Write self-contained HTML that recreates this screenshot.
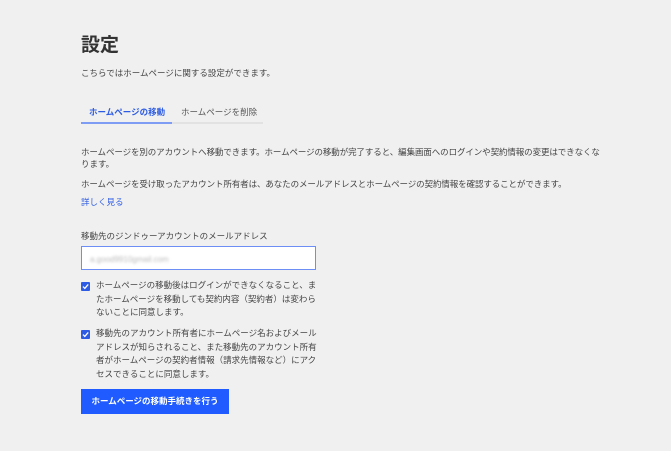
<!DOCTYPE html>
<html><head><meta charset="utf-8"><style>
*{margin:0;padding:0;box-sizing:border-box}
body{width:671px;height:451px;background:#f0f0f0;font-family:"Liberation Sans","Noto Sans CJK JP",sans-serif;color:#444;font-size:8.5px;position:relative;overflow:hidden}
.a{position:absolute;white-space:nowrap}
h1{position:absolute;left:81px;top:30px;font-size:19px;font-weight:bold;color:#333}
.tabline{position:absolute;left:81px;top:122px;width:182px;height:2px;background:#e2e2e2}
.tabact{position:absolute;left:81px;top:122px;width:91px;height:2px;background:#7f9cf5}
.inp{position:absolute;left:81px;top:246px;width:235px;height:24px;border:1.5px solid #6d8ef5;background:#fff}
.blur{position:absolute;left:8px;top:8px;color:#bbb;filter:blur(1.2px);font-size:8px}
.cb{position:absolute;width:9px;height:9px;background:#2d5be3;border-radius:1px}
.cb svg{position:absolute;left:0;top:0}
.btn{position:absolute;left:81px;top:389px;width:148px;height:25px;background:#1f5bff;color:#fff;font-weight:bold;font-size:8.5px;text-align:center;line-height:25px}
.lh{line-height:13.5px;white-space:normal}
.p{letter-spacing:-0.1px}
</style></head><body>
<h1>設定</h1>
<div class="a" style="left:81px;top:67px">こちらではホームページに関する設定ができます。</div>
<div class="a" style="left:89px;top:106px;color:#2d5be3;font-weight:bold">ホームページの移動</div>
<div class="a" style="left:181px;top:106px;color:#555">ホームページを削除</div>
<div class="tabline"></div><div class="tabact"></div>
<div class="a p" style="left:81px;top:146px">ホームページを別のアカウントへ移動できます。ホームページの移動が完了すると、編集画面へのログインや契約情報の変更はできなくな</div>
<div class="a" style="left:81px;top:158px">ります。</div>
<div class="a p" style="left:81px;top:178px">ホームページを受け取ったアカウント所有者は、あなたのメールアドレスとホームページの契約情報を確認することができます。</div>
<div class="a" style="left:81px;top:196px;color:#2d5be3">詳しく見る</div>
<div class="a" style="left:81px;top:230px">移動先のジンドゥーアカウントのメールアドレス</div>
<div class="inp"><div class="blur">a.good9910gmail.com</div></div>
<div class="cb" style="left:81px;top:282px"><svg width="9" height="9" viewBox="0 0 9 9"><path d="M2 4.6L3.8 6.4L7.2 2.4" stroke="#fff" stroke-width="1.3" fill="none"/></svg></div>
<div class="a lh" style="left:96px;top:279px;width:222px">ホームページの移動後はログインができなくなること、またホームページを移動しても契約内容（契約者）は変わらないことに同意します。</div>
<div class="cb" style="left:81px;top:330px"><svg width="9" height="9" viewBox="0 0 9 9"><path d="M2 4.6L3.8 6.4L7.2 2.4" stroke="#fff" stroke-width="1.3" fill="none"/></svg></div>
<div class="a lh" style="left:96px;top:327px;width:222px">移動先のアカウント所有者にホームページ名およびメールアドレスが知らされること、また移動先のアカウント所有者がホームページの契約者情報（請求先情報など）にアクセスできることに同意します。</div>
<div class="btn">ホームページの移動手続きを行う</div>
</body></html>
